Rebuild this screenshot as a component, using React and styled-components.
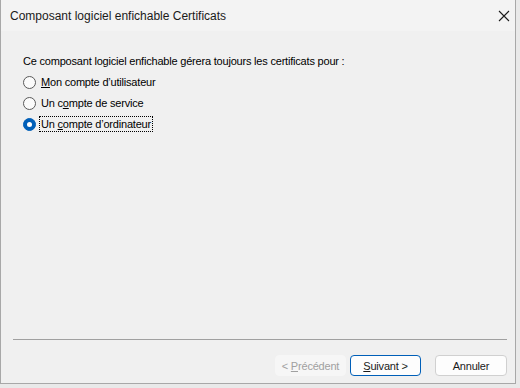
import React from 'react'
import styled, { createGlobalStyle } from 'styled-components'

const options = [
  { id: 'user', before: '', key: 'M', after: 'on compte d’utilisateur' },
  { id: 'service', before: 'Un c', key: 'o', after: 'mpte de service' },
  { id: 'computer', before: 'Un ', key: 'c', after: 'ompte d’ordinateur' },
]

const App = () => {
  const selected = 'computer'
  return (
    <>
      <GlobalStyle />
      <Window>
        <TitleBar>
          <Title>Composant logiciel enfichable Certificats</Title>
          <Close>
            <svg width="12" height="12" viewBox="0 0 12 12">
              <path d="M1 1 L11 11 M11 1 L1 11" stroke="#1b1b1b" strokeWidth="1.1" />
            </svg>
          </Close>
        </TitleBar>
        <Body>
          <Intro>Ce composant logiciel enfichable gérera toujours les certificats pour :</Intro>
          <Options>
            {options.map((o) => (
              <Option key={o.id}>
                <Radio $checked={o.id === selected} />
                <Label $focused={o.id === selected}>
                  {o.before}<u>{o.key}</u>{o.after}
                </Label>
              </Option>
            ))}
          </Options>
          <Spacer />
          <Separator />
          <Footer>
            <Button disabled>&lt; <u>P</u>récédent</Button>
            <Button $default><u>S</u>uivant &gt;</Button>
            <Button $wide>Annuler</Button>
          </Footer>
        </Body>
      </Window>
    </>
  )
}

const GlobalStyle = createGlobalStyle`
  body {
    margin: 0;
    background: #e9e9e9;
    font-family: "Liberation Sans", Arial, sans-serif;
  }
`
const Window = styled.div`
  width: 516px;
  height: 384px;
  box-sizing: border-box;
  border: 1px solid #a8a8a8;
  border-top: none;
  display: flex;
  flex-direction: column;
  background: #f0f0f0;
`
const TitleBar = styled.div`
  height: 31px;
  flex-shrink: 0;
  display: flex;
  align-items: center;
  justify-content: space-between;
  background: #f3f3f3;
  padding-left: 9px;
`
const Title = styled.span`
  font-size: 12px;
  color: #1a1a1a;
  padding-top: 1px;
`
const Close = styled.div`
  width: 22px;
  display: flex;
  justify-content: center;
`
const Body = styled.div`
  flex: 1;
  display: flex;
  flex-direction: column;
  padding: 24px 8px 7px 22px;
  font-size: 11px;
  letter-spacing: -0.2px;
  color: #000;
`
const Intro = styled.div`
  margin-bottom: 8px;
`
const Options = styled.div`
  display: flex;
  flex-direction: column;
  gap: 7px;
`
const Option = styled.div`
  display: flex;
  align-items: center;
  gap: 4px;
  height: 14px;
`
const Radio = styled.span`
  width: 13px;
  height: 13px;
  box-sizing: border-box;
  border-radius: 50%;
  border: 1px solid ${({ $checked }) => ($checked ? '#005fb8' : '#5a5a5a')};
  background: ${({ $checked }) => ($checked ? '#005fb8' : '#fbfbfb')};
  display: flex;
  align-items: center;
  justify-content: center;
  &::after {
    content: '';
    width: 5px;
    height: 5px;
    border-radius: 50%;
    background: ${({ $checked }) => ($checked ? '#fff' : 'transparent')};
  }
`
const Label = styled.span`
  outline: ${({ $focused }) => ($focused ? '1px dotted #000' : 'none')};
  outline-offset: 0;
  padding: 0 1px;
  line-height: 14px;
  u { text-underline-offset: 1px; }
`
const Spacer = styled.div`
  flex: 1;
`
const Separator = styled.div`
  height: 1px;
  background: #a0a0a0;
  margin: 0 0 15px -10px;
`
const Footer = styled.div`
  display: flex;
  justify-content: flex-end;
  gap: 4px;
`
const Button = styled.button`
  width: ${({ $wide }) => ($wide ? '72px' : '71px')};
  height: 21px;
  box-sizing: border-box;
  margin-left: ${({ $wide }) => ($wide ? '10px' : '0')};
  font-family: "Liberation Sans", Arial, sans-serif;
  font-size: 11px;
  letter-spacing: -0.2px;
  color: #1a1a1a;
  background: #fdfdfd;
  border: 1px solid ${({ $default }) => ($default ? '#005fb8' : '#d0d0d0')};
  border-radius: 4px;
  padding: 0;
  &:disabled {
    color: #a0a0a0;
    background: #f6f6f6;
    border-color: #f6f6f6;
  }
`

export default App
